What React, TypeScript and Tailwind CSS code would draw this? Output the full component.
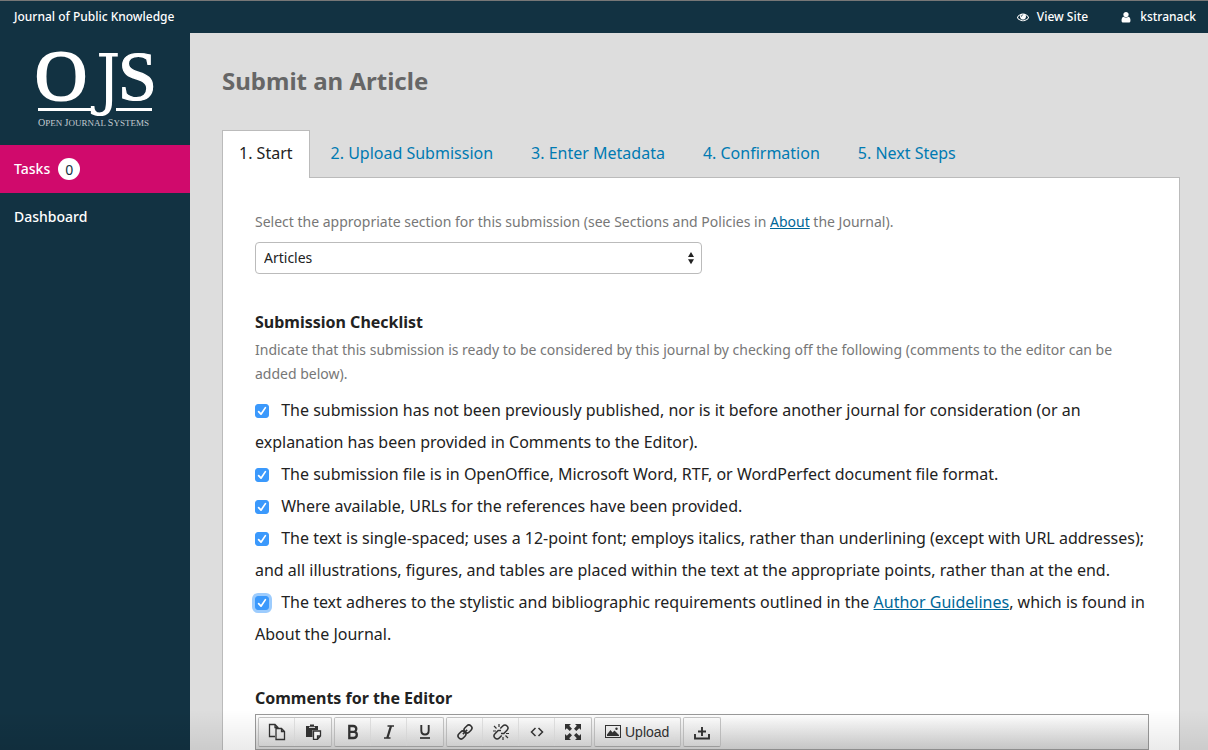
import React from "react";

const tabs = ["1. Start", "2. Upload Submission", "3. Enter Metadata", "4. Confirmation", "5. Next Steps"];

function EyeIcon() {
  return (
    <svg viewBox="0 0 1792 1792" className="size-3 fill-current" aria-hidden="true">
      <path d="M1664 960q-152-236-381-353 61 104 61 225 0 185-131.5 316.5t-316.5 131.5-316.5-131.5-131.5-316.5q0-121 61-225-229 117-381 353 133 205 333.5 326.5t434.5 121.5 434.5-121.5 333.5-326.5zm-720-384q0-20-14-34t-34-14q-125 0-214.5 89.5t-89.5 214.5q0 20 14 34t34 14 34-14 14-34q0-86 61-147t147-61q20 0 34-14t14-34zm848 384q0 34-20 69-140 230-376.5 368.5t-499.5 138.5-499.5-139-376.5-368q-20-35-20-69t20-69q140-229 376.5-368t499.5-139 499.5 139 376.5 368q20 35 20 69z" />
    </svg>
  );
}

function UserIcon() {
  return (
    <svg viewBox="64 0 1664 1728" className="size-3 fill-current" aria-hidden="true">
      <path d="M1536 1399q0 109-62.5 187t-150.5 78h-854q-88 0-150.5-78t-62.5-187q0-85 8.5-160.5t31.5-152 58.5-131 94-89 134.5-34.5q131 128 313 128t313-128q76 0 134.5 34.5t94 89 58.5 131 31.5 152 8.5 160.5zm-256-887q0 159-112.5 271.5t-271.5 112.5-271.5-112.5-112.5-271.5 112.5-271.5 271.5-112.5 271.5 112.5 112.5 271.5z" />
    </svg>
  );
}

function Logo() {
  return (
    <svg viewBox="0 0 130 96" className="h-24 w-[130px] overflow-visible" fill="#fff" role="img" aria-label="Open Journal Systems">
      <text x="5" y="67" fontFamily="Liberation Serif, serif" fontSize="72" stroke="#fff" strokeWidth="2.2">O</text>
      <text x="66" y="69" fontFamily="DejaVu Serif Condensed, DejaVu Serif, serif" fontSize="68">J</text>
      <text x="88" y="67" fontFamily="Liberation Serif, serif" fontSize="70" stroke="#fff" strokeWidth="1.2">S</text>
      <rect x="8" y="75" width="53" height="3" />
      <rect x="86" y="75" width="36" height="3" />
      <text x="8" y="93" fontFamily="Liberation Serif, serif" fontSize="9" fill="#c3ccd1">
        <tspan fontSize="10">O</tspan>PEN <tspan fontSize="10">J</tspan>OURNAL <tspan fontSize="10">S</tspan>YSTEMS
      </text>
    </svg>
  );
}

function Check({ id, focused = false, children }: { id: string; focused?: boolean; children: React.ReactNode }) {
  return (
    <li>
      <span className="relative mr-2 inline-block size-[14px] align-[-2px]">
        <input
          id={id}
          type="checkbox"
          defaultChecked
          className={
            focused
              ? "block size-[14px] appearance-none rounded-[3px] border border-[#3b99fc] bg-white ring-3 ring-[#9dccfd] checked:bg-[#3b99fc]"
              : "block size-[14px] appearance-none rounded-[3px] border border-[#3b99fc] bg-white checked:bg-[#3b99fc]"
          }
        />
        <svg viewBox="0 0 14 14" className="pointer-events-none absolute inset-0 size-[14px]" fill="none" stroke="#fff" strokeWidth="1.7" strokeLinecap="round" strokeLinejoin="round" aria-hidden="true">
          <path d="M3.6 7.6 6 10.2 10.4 3.6" />
        </svg>
      </span>{" "}
      <label htmlFor={id}>{children}</label>
    </li>
  );
}

function Group({ children }: { children: React.ReactNode }) {
  return (
    <div className="flex h-[30px] divide-x divide-[#e2e2e2] rounded-xs border border-[#c4c4c4] border-b-[#a8a8a8] bg-linear-to-b from-[#fdfdfd] to-[#dedede]">
      {children}
    </div>
  );
}

function Tool({ label, children }: { label: string; children: React.ReactNode }) {
  return (
    <button type="button" aria-label={label} className="flex w-9 items-center justify-center text-[#333]">
      <svg viewBox="0 0 18 18" className="size-[18px]" fill="none" stroke="currentColor" strokeWidth="1.3" aria-hidden="true">
        {children}
      </svg>
    </button>
  );
}

export default function App() {
  return (
    <div className="relative flex min-h-screen flex-col bg-[#ddd] font-['Noto_Sans',sans-serif] text-[#222]">
      <header className="flex h-[33px] items-center justify-between border-t border-[#777] bg-[#123242] pr-3 pl-[14px] text-[12px] font-medium text-white">
        <a href="#journal">Journal of Public Knowledge</a>
        <nav className="flex gap-8">
          <a href="#site" className="flex items-center gap-2"><EyeIcon />View Site</a>
          <a href="#user" className="flex items-center gap-2"><UserIcon />kstranack</a>
        </nav>
      </header>
      <div className="flex flex-1">
        <aside className="w-[190px] shrink-0 bg-[#123242] text-[14px] font-medium text-white">
          <div className="flex h-28 justify-center"><Logo /></div>
          <nav>
            <a href="#tasks" className="flex h-12 items-center gap-2 bg-[#d00a6c] px-[14px]">
              <span className="pb-0.5">Tasks</span>
              <span className="flex size-[22px] items-center justify-center rounded-full bg-white text-[14px] font-normal text-[#123242]">0</span>
            </a>
            <a href="#dashboard" className="flex h-12 items-center px-[14px] pb-0.5">Dashboard</a>
          </nav>
        </aside>
        <main className="flex min-w-0 flex-1 flex-col pr-7 pl-8">
          <h1 className="pt-8 text-[24px] leading-8 font-bold text-[#666]">Submit an Article</h1>
          <div role="tablist" className="mt-[33px] flex h-12 text-[16px]">
            {tabs.map((t, i) => (
              <button
                key={t}
                type="button"
                role="tab"
                aria-selected={i === 0}
                className={
                  i === 0
                    ? "relative z-10 mr-1 border border-b-0 border-[#bbb] bg-white px-4 pb-[3px]"
                    : "mr-1 px-[17px] pb-0.5 text-[#007ab2]"
                }
              >
                {t}
              </button>
            ))}
          </div>
          <form className="-mt-px flex-1 border border-b-0 border-[#bbb] bg-white px-8 pt-8 pr-[30px]">
            <label htmlFor="section" className="block text-[14px] leading-6 text-[#777]">
              Select the appropriate section for this submission (see Sections and Policies in{" "}
              <a href="#about" className="text-[#006798] underline">About</a> the Journal).
            </label>
            <div className="relative mt-2 w-1/2">
              <select id="section" className="block h-8 w-full appearance-none rounded-sm border border-[#bbb] bg-white px-2 pb-0.5 text-[14px]">
                <option>Articles</option>
              </select>
              <svg viewBox="0 0 8 14" className="pointer-events-none absolute top-[9px] right-[7px] h-[14px] w-2" fill="#222" aria-hidden="true">
                <path d="M1 6 4 1 7 6ZM1 8.3 4 13.3 7 8.3Z" />
              </svg>
            </div>
            <h2 className="mt-9 text-[16px] leading-6 font-bold">Submission Checklist</h2>
            <p className="mt-1 text-[14px] leading-6 text-[#777]">
              Indicate that this submission is ready to be considered by this journal by checking off the following (comments to the editor can be added below).
            </p>
            <ul className="mt-2 text-[16px] leading-8">
              <Check id="c1">The submission has not been previously published, nor is it before another journal for consideration (or an explanation has been provided in Comments to the Editor).</Check>
              <Check id="c2">The submission file is in OpenOffice, Microsoft Word, RTF, or WordPerfect document file format.</Check>
              <Check id="c3">Where available, URLs for the references have been provided.</Check>
              <Check id="c4">The text is single-spaced; uses a 12-point font; employs italics, rather than underlining (except with URL addresses); and all illustrations, figures, and tables are placed within the text at the appropriate points, rather than at the end.</Check>
              <Check id="c5" focused>
                The text adheres to the stylistic and bibliographic requirements outlined in the{" "}
                <a href="#guidelines" className="text-[#006798] underline">Author Guidelines</a>, which is found in About the Journal.
              </Check>
            </ul>
            <h2 className="mt-9 text-[16px] leading-6 font-bold">Comments for the Editor</h2>
            <div role="toolbar" aria-label="Formatting" className="mt-1 flex h-9 gap-0.5 border border-[#999] bg-linear-to-b from-white to-[#d6d6d6] p-0.5">
              <Group>
                <Tool label="Copy">
                  <path d="M7 13.5H1.5V1.5H7L10 4.5V6M7 1.5V4.5H10M8 5.5H13.5L16.5 8.5V16.5H8ZM13.5 5.5V8.5H16.5" />
                </Tool>
                <Tool label="Paste">
                  <path d="M2 3H6V1.500H10V3H14V7H8.500V14H2Z" fill="currentColor" stroke="none" />
                  <path d="M5 4.300H11" stroke="#fff" strokeWidth="1" />
                  <path d="M9.500 8H16.500V13L13.500 16.300H9.500ZM16.500 13H13.500V16" fill="#fff" />
                </Tool>
              </Group>
              <Group>
                <Tool label="Bold">
                  <path d="M5.300 3V15H9.500Q12.800 15 12.800 11.700 12.800 9.300 10.500 8.800 12.300 8 12.300 6 12.300 3 9.200 3ZM6.300 8.800H10.500" strokeWidth="2.300" />
                </Tool>
                <Tool label="Italic">
                  <path d="M7.500 3H14M4 15H10.500" strokeWidth="1.500" />
                  <path d="M11 3 7.300 15" strokeWidth="2.300" />
                </Tool>
                <Tool label="Underline">
                  <path d="M5.300 2V7.500Q5.300 11.500 9 11.500T12.700 7.500V2" strokeWidth="1.900" />
                  <path d="M4 15H14" strokeWidth="1.700" />
                </Tool>
              </Group>
              <Group>
                <Tool label="Link">
                  <g transform="rotate(-45 9 9)" strokeWidth="1.600">
                    <rect x="0.500" y="6" width="8.500" height="6" rx="3" />
                    <rect x="9" y="6" width="8.500" height="6" rx="3" />
                    <path d="M6 9H12" />
                  </g>
                </Tool>
                <Tool label="Remove link">
                  <g transform="rotate(-45 9 9)" strokeWidth="1.500">
                    <path d="M7 12H3.500A3 3 0 0 1 3.500 6H8L10 8M11 6H14.500A3 3 0 0 1 14.500 12H10L8 10" />
                  </g>
                  <path d="M7 1V4M2 3 4.500 5.500M1 8H4M11 17V14M16 15 13.500 12.500M17 10.500H14" strokeWidth="1.200" />
                </Tool>
                <Tool label="Source code">
                  <path d="M7.500 5 3.500 9 7.500 13M10.500 5 14.500 9 10.500 13" strokeWidth="1.500" />
                </Tool>
                <Tool label="Full screen">
                  <path d="M1 1H7L5.200 2.800 8 5.700 5.700 8 2.800 5.200 1 7ZM17 1H11L12.800 2.800 10 5.700 12.300 8 15.200 5.200 17 7ZM1 17H7L5.200 15.200 8 12.300 5.700 10 2.800 12.800 1 11ZM17 17H11L12.800 15.200 10 12.300 12.300 10 15.200 12.800 17 11Z" fill="currentColor" stroke="none" />
                </Tool>
              </Group>
              <Group>
                <button type="button" className="flex items-center gap-1 pr-[11px] pl-[10px] font-['Liberation_Sans',sans-serif] text-[14px] text-[#333]">
                  <svg viewBox="0 0 16 14" className="h-[14px] w-4" fill="none" stroke="currentColor" aria-hidden="true">
                    <rect x="0.500" y="0.500" width="15" height="12" />
                    <path d="M2 11V9.500L5.500 5 7.500 7.500 9.500 5.500 14 10V11Z" fill="currentColor" stroke="none" />
                    <circle cx="11.500" cy="3.700" r="1.200" fill="currentColor" stroke="none" />
                  </svg>
                  Upload
                </button>
              </Group>
              <Group>
                <Tool label="Insert file">
                  <path d="M2 11V15.500H16V11M9 4V13M5 8.500H13" strokeWidth="1.900" />
                </Tool>
              </Group>
            </div>
          </form>
        </main>
      </div>
      <div className="pointer-events-none absolute inset-x-0 bottom-0 z-20 h-10 bg-linear-to-b from-transparent to-black/8" />
    </div>
  );
}
